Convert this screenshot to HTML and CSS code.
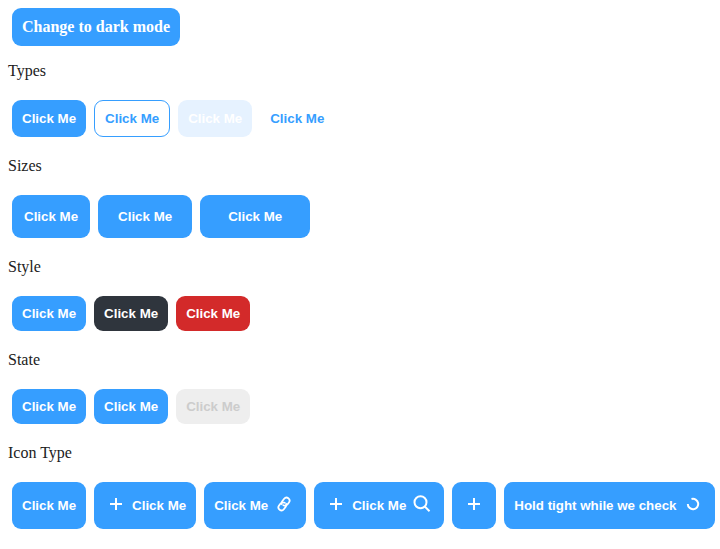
FILE: index.html
```
<!DOCTYPE html>
<html lang="en">
<head>
<meta charset="utf-8">
<title>Buttons</title>
<link rel="stylesheet" href="styles.css">
</head>
<body>
<button type="button" class="btn mode">Change to dark mode</button>
<section>
<p>Types</p>
<div class="row">
<button type="button" class="btn">Click Me</button>
<button type="button" class="btn outline">Click Me</button>
<button type="button" class="btn ghost">Click Me</button>
<button type="button" class="btn text">Click Me</button>
</div>
</section>
<section>
<p>Sizes</p>
<div class="row">
<button type="button" class="btn small">Click Me</button>
<button type="button" class="btn medium">Click Me</button>
<button type="button" class="btn large">Click Me</button>
</div>
</section>
<section>
<p>Style</p>
<div class="row">
<button type="button" class="btn">Click Me</button>
<button type="button" class="btn dark">Click Me</button>
<button type="button" class="btn danger">Click Me</button>
</div>
</section>
<section>
<p>State</p>
<div class="row">
<button type="button" class="btn">Click Me</button>
<button type="button" class="btn">Click Me</button>
<button type="button" class="btn" disabled>Click Me</button>
</div>
</section>
<section>
<p>Icon Type</p>
<div class="row icons">
<button type="button" class="btn">Click Me</button>
<button type="button" class="btn"><svg viewBox="0 0 24 24"><path d="M12 6v12M6 12h12"/></svg>Click Me</button>
<button type="button" class="btn">Click Me<svg viewBox="-8 -8 40 40" class="link"><path transform="rotate(-8 12 12)" d="M10 13a5 5 0 0 0 7.540.540l3-3a5 5 0 0 0-7.070-7.070l-3.720 3.710a5 5 0 0 0-.9 5.500M14 11a5 5 0 0 0-.5-.8M14 11a5 5 0 0 0-7.540-.540l-3 3a5 5 0 0 0 7.070 7.070l3.710-3.710a5 5 0 0 0 .8-5.500"/></svg></button>
<button type="button" class="btn"><svg viewBox="0 0 24 24"><path d="M12 6v12M6 12h12"/></svg>Click Me<svg viewBox="0 0 24 24"><circle cx="10.500" cy="10.200" r="6"/><path d="M14.500 14.200l5 5"/></svg></button>
<button type="button" class="btn" aria-label="Add"><svg viewBox="0 0 24 24"><path d="M12 6v12M6 12h12"/></svg></button>
<button type="button" class="btn">Hold tight while we check<svg viewBox="0 0 24 24"><path d="M10.500 7a5.200 5.200 0 1 1-3.700 5"/></svg></button>
</div>
</section>
</body>
</html>
```
FILE: styles.css
```
body {
  margin: 0;
  padding: 8px 0 0 8px;
  background: #fff;
  color: #212121;
  font: 16px/18px "Liberation Serif", serif;
}

p {
  margin: 16px 0 20px;
}

.row {
  display: flex;
  gap: 8px;
  margin: 0 4px 20px;
}

.btn {
  display: flex;
  flex: none;
  align-items: center;
  justify-content: center;
  gap: 4px;
  padding: 10px;
  border: 0;
  border-radius: 9px;
  background: #369eff;
  color: #fff;
  font-family: "Liberation Sans", sans-serif;
  font-weight: bold;
  line-height: 15px;
  white-space: nowrap;
}

.mode {
  margin-left: 4px;
  font: bold 16px/18px "Liberation Serif", serif;
}

.outline {
  border: 1px solid #369eff;
  background: #fff;
  color: #369eff;
}

.ghost {
  background: #e6f2ff;
}

.text {
  background: transparent;
  color: #369eff;
}

.small {
  padding: 14px 12px;
}

.medium {
  padding: 14px 20px;
}

.large {
  padding: 14px 28px;
}

.dark {
  background: #2f353d;
}

.danger {
  background: #d32a2a;
}

.btn:disabled {
  background: #eee;
  color: #ccc;
}

.icons .btn {
  min-height: 47px;
}

svg {
  align-self: flex-start;
  width: 24px;
  height: 24px;
  fill: none;
  stroke: currentColor;
  stroke-width: 2;
}

.link {
  stroke-width: 3;
}
```
